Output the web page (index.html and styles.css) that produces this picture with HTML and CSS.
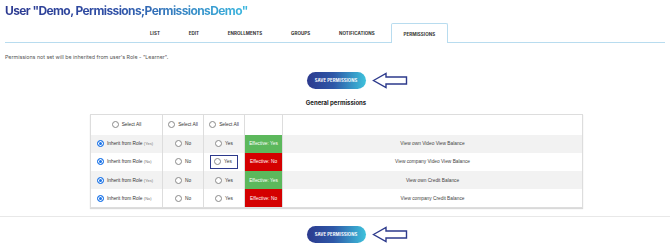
FILE: index.html
```html
<!DOCTYPE html>
<html>
<head>
<meta charset="utf-8">
<link rel="stylesheet" href="styles.css">
</head>
<body>
<h1 class="title"><span class="grad">User "Demo, Permissions;PermissionsDemo"</span></h1>
<nav class="tabs">
  <a class="tab">LIST</a>
  <a class="tab">EDIT</a>
  <a class="tab">ENROLLMENTS</a>
  <a class="tab">GROUPS</a>
  <a class="tab">NOTIFICATIONS</a>
  <a class="tab active">PERMISSIONS</a>
</nav>
<p class="info">Permissions not set will be inherited from user's Role - "Learner".</p>
<div class="save-row">
  <div class="save-wrap">
    <button class="save">SAVE PERMISSIONS</button>
    <svg class="arrow" width="36" height="17" viewBox="0 0 36 17"><path d="M1.5 8.5 L14 1.5 L14 5 L34.5 5 L34.5 12 L14 12 L14 15.5 Z" fill="none" stroke="#2d3a8c" stroke-width="1.4" stroke-linejoin="miter"/></svg>
  </div>
</div>
<h2 class="section">General permissions</h2>
<table class="perm">
  <tr class="head">
    <td class="c1"><span class="r"></span>Select All</td>
    <td class="c2"><span class="r"></span>Select All</td>
    <td class="c3"><span class="r"></span>Select All</td>
    <td class="c4"></td>
    <td class="c5"></td>
  </tr>
  <tr class="odd">
    <td class="c1"><span class="r on"></span>Inherit from Role <small>(Yes)</small></td>
    <td class="c2"><span class="r"></span>No</td>
    <td class="c3"><span class="r"></span>Yes</td>
    <td class="c4 yes">Effective: Yes</td>
    <td class="c5">View own Video View Balance</td>
  </tr>
  <tr>
    <td class="c1"><span class="r on"></span>Inherit from Role <small>(No)</small></td>
    <td class="c2"><span class="r"></span>No</td>
    <td class="c3"><span class="mark"><span class="r"></span>Yes</span></td>
    <td class="c4 no">Effective: No</td>
    <td class="c5">View company Video View Balance</td>
  </tr>
  <tr class="odd">
    <td class="c1"><span class="r on"></span>Inherit from Role <small>(Yes)</small></td>
    <td class="c2"><span class="r"></span>No</td>
    <td class="c3"><span class="r"></span>Yes</td>
    <td class="c4 yes">Effective: Yes</td>
    <td class="c5">View own Credit Balance</td>
  </tr>
  <tr>
    <td class="c1"><span class="r on"></span>Inherit from Role <small>(No)</small></td>
    <td class="c2"><span class="r"></span>No</td>
    <td class="c3"><span class="r"></span>Yes</td>
    <td class="c4 no">Effective: No</td>
    <td class="c5">View company Credit Balance</td>
  </tr>
</table>
<hr class="sep">
<div class="save-row bottom">
  <div class="save-wrap">
    <button class="save">SAVE PERMISSIONS</button>
    <svg class="arrow" width="36" height="17" viewBox="0 0 36 17"><path d="M1.5 8.5 L14 1.5 L14 5 L34.5 5 L34.5 12 L14 12 L14 15.5 Z" fill="none" stroke="#2d3a8c" stroke-width="1.4" stroke-linejoin="miter"/></svg>
  </div>
</div>
</body>
</html>
```
FILE: styles.css
```css
html, body { margin: 0; padding: 0; background: #fff; }
body { font-family: Inter, "Open Sans", sans-serif; color: #333; width: 670px; height: 246px; overflow: hidden; }

.title { margin: 0; padding: 2px 0 0 5px; font-size: 12px; font-weight: 700; line-height: 18px; letter-spacing: -0.6px; }
.grad { background: linear-gradient(90deg, #2c3990 0%, #2f4fa6 45%, #3cb9e0 100%); -webkit-background-clip: text; background-clip: text; color: transparent; }

.tabs { display: flex; margin: 3px 5px 0 5px; padding-left: 132px; border-bottom: 1px solid #b8dcef; height: 19px; }
.tab { display: flex; align-items: center; padding: 1px 12px 0 12px; border: 1px solid transparent; border-bottom: none; font-size: 4.5px; font-weight: 700; color: #333; letter-spacing: 0.05px; margin-right: 2.7px; }
.tab.active { border-color: #b8dcef; border-radius: 2px 2px 0 0; background: #fff; margin-bottom: -1px; }

.info { margin: 10px 0 0 5px; font-size: 5.3px; color: #555; line-height: 8px; }

.save-row { display: flex; justify-content: center; margin-top: 11px; padding-left: 2px; }
.save-wrap { position: relative; }
.save { display: block; width: 59px; height: 17px; border: none; border-radius: 9px; background: linear-gradient(90deg, #2c3a8e 0%, #2e58a8 45%, #3ec2dc 100%); color: #fff; font-family: Inter, sans-serif; font-size: 4.2px; font-weight: 700; letter-spacing: 0.1px; padding: 0; }
.arrow { position: absolute; left: 65px; top: 0; }

.section { margin: 10px 0 0 0; text-align: center; font-size: 6px; font-weight: 700; color: #222; padding-left: 2px; }

.perm { margin: 8px 0 0 90px; width: 493px; border-collapse: collapse; border: 1px solid #ddd; box-shadow: 0 1px 1px rgba(0,0,0,0.15); font-family: "Liberation Sans", Arial, sans-serif; font-size: 4.8px; color: #333; table-layout: fixed; }
.perm td { border-left: 1px solid #ddd; border-right: 1px solid #ddd; text-align: center; vertical-align: middle; padding: 0; white-space: nowrap; }
.perm tr { height: 18.3px; }
.perm tr.head { height: 20px; }
.perm tr.odd td { background: #f2f2f2; }
.c1 { width: 71px; }
.c2 { width: 40px; }
.c3 { width: 40px; }
.c4 { width: 37px; }
.perm td.c1 { text-align: left; padding-left: 6px; }
.perm tr.head td.c1 { text-align: center; padding-left: 0; }
.perm tr.odd td.yes, .perm td.yes { background: #5cb85c; color: #fff; }
.perm tr.odd td.no, .perm td.no { background: #d40000; color: #fff; }
.perm td.c5 { color: #444; }
small { font-size: 4px; color: #777; }

.r { display: inline-block; width: 5px; height: 5px; border: 0.8px solid #8a8a8a; border-radius: 50%; background: #fff; vertical-align: -1.6px; margin-right: 3px; box-sizing: content-box; }
.r.on { border-color: #1a73e8; background: #1a73e8; box-shadow: inset 0 0 0 1px #fff; }
.mark { display: inline-block; border: 1.2px solid #2d3a8c; padding: 1.5px 5px 1.5px 3px; line-height: 8px; }

.sep { margin: 8px 0 0 0; border: none; border-top: 1px solid #e8e8e8; }
.bottom { margin-top: 9px; }
```
